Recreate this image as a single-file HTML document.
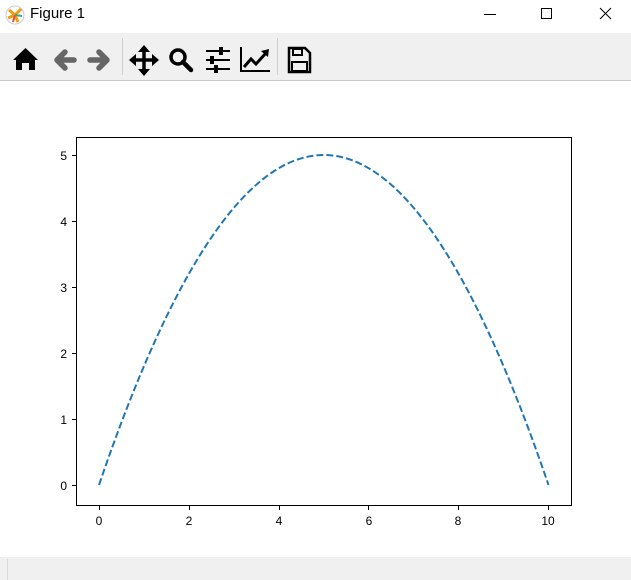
<!DOCTYPE html>
<html><head><meta charset="utf-8"><style>
body{margin:0;width:631px;height:580px;background:#fff;position:relative;overflow:hidden;font-family:"Liberation Sans",sans-serif}
.title{position:absolute;left:30px;top:5px;font-size:15px;color:#000}
.tb{position:absolute;left:0;top:33px;width:631px;height:47px;background:#f0f0f0;border-bottom:1px solid #c8c8c8}
.status{position:absolute;left:0;top:557px;width:631px;height:23px;background:#f0f0f0}
.sep{position:absolute;top:5px;width:1px;height:37px;background:#d0d0d0}
</style></head><body>
<svg style="position:absolute;left:5px;top:5px" width="20" height="20" viewBox="0 0 20 20">
<circle cx="10" cy="10" r="9" fill="#fff" stroke="#ccc"/>
<path d="M10 10 L4 5 M10 10 L16 4 M10 10 L3 13 M10 10 L13 17" stroke="#f39c12" stroke-width="3"/>
<path d="M10 10 L8 17" stroke="#e74c3c" stroke-width="2"/>
<path d="M10 10 L17 11" stroke="#3a8" stroke-width="2"/>
</svg>
<div class="title">Figure 1</div>
<svg style="position:absolute;left:0;top:0" width="631" height="30">
<path d="M484 14.5h12" stroke="#000" stroke-width="1"/>
<rect x="541.5" y="8.5" width="10" height="10" fill="none" stroke="#000"/>
<path d="M600 8l11 11M611 8l-11 11" stroke="#000" stroke-width="1"/>
</svg>
<div class="tb">
<div class="sep" style="left:122px"></div>
<div class="sep" style="left:277px"></div>
<svg width="631" height="47" style="position:absolute;left:0;top:0">
<path d="M13 27 L25.5 15 L38 27 L35 27 L35 37 L29 37 L29 30 L22 30 L22 37 L16 37 L16 27Z" fill="#000"/>
<path d="M74 27 H59 M65 19 L57 27 L65 35" stroke="#666" stroke-width="5.5" fill="none" stroke-linecap="round" stroke-linejoin="round"/>
<path d="M90 27 H105 M99 19 L107 27 L99 35" stroke="#666" stroke-width="5.5" fill="none" stroke-linecap="round" stroke-linejoin="round"/>
<path d="M144 15 V40 M131 27 H157" stroke="#000" stroke-width="3.5"/>
<path d="M144 12 L138 19 H150Z M144 43 L138 36 H150Z M129 27 L136 21 V33Z M159 27 L152 21 V33Z" fill="#000"/>
<circle cx="178" cy="24" r="7" fill="none" stroke="#000" stroke-width="3.5"/>
<path d="M183 29 L191 37" stroke="#000" stroke-width="4.5" stroke-linecap="round"/>
<path d="M206 18H230M206 27H230M206 36H230" stroke="#000" stroke-width="2"/>
<rect x="219" y="14" width="4" height="8" fill="#000"/><rect x="210" y="23" width="4" height="8" fill="#000"/><rect x="214" y="32" width="4" height="8" fill="#000"/>
<path d="M241 14 V38 H270" stroke="#000" stroke-width="2" fill="none"/>
<path d="M244 34 L251 26 L256 31 L266 20" stroke="#000" stroke-width="3" fill="none"/>
<path d="M261 18 L269 16 L268 24Z" fill="#000"/>
<path d="M289 15 H305 L310 20 V39 H289Z" fill="none" stroke="#000" stroke-width="2.5"/>
<rect x="293" y="16" width="9" height="6" fill="none" stroke="#000" stroke-width="2"/>
<rect x="292" y="29" width="15" height="9" fill="none" stroke="#000" stroke-width="2"/>
</svg>
</div>
<svg style="position:absolute;left:0;top:0" width="631" height="557" font-family="Liberation Sans, sans-serif" font-size="12">
<rect x="76.5" y="137.5" width="495" height="368" fill="none" stroke="#000" stroke-width="1"/>
<path d="M99 485 Q323.75 -175 548.5 485" fill="none" stroke="#1f77b4" stroke-width="2" stroke-dasharray="7 3"/>
<g stroke="#000">
<path d="M72 485.5h4M72 419.5h4M72 353.5h4M72 287.5h4M72 221.5h4M72 155.5h4"/>
<path d="M99.5 506v4M189.5 506v4M279.5 506v4M368.5 506v4M458.5 506v4M548.5 506v4"/>
</g>
<g text-anchor="end">
<text x="67" y="490">0</text><text x="67" y="424">1</text><text x="67" y="358">2</text><text x="67" y="292">3</text><text x="67" y="226">4</text><text x="67" y="160">5</text>
</g>
<g text-anchor="middle">
<text x="99" y="525">0</text><text x="189" y="525">2</text><text x="279" y="525">4</text><text x="369" y="525">6</text><text x="458" y="525">8</text><text x="548" y="525">10</text>
</g>
</svg>
<div class="status"><div style="position:absolute;left:7px;top:2px;width:1px;height:21px;background:#d8d8d8"></div></div>
</body></html>
